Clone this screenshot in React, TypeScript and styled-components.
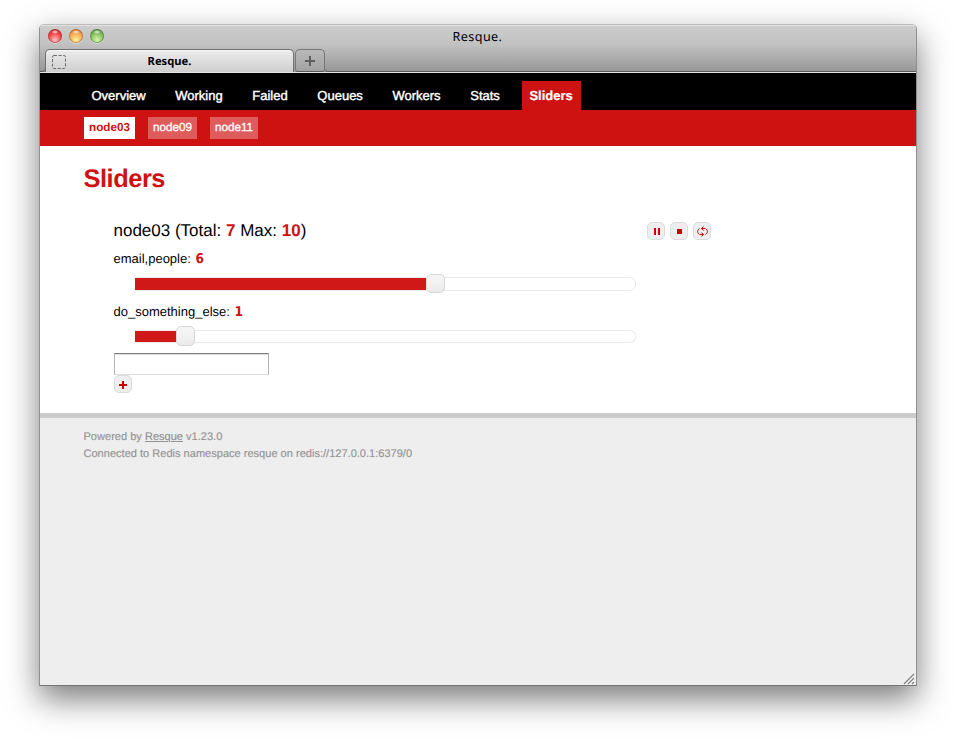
import React from "react";
import styled, { createGlobalStyle } from "styled-components";

const GlobalStyle = createGlobalStyle`
  * { box-sizing: border-box; }
  body {
    margin: 0;
    background: #fff;
    overflow: hidden;
    font-family: "Liberation Sans", Arial, sans-serif;
    font-size: 13px;
    color: #000;
    text-rendering: geometricPrecision;
  }
`;

const Desktop = styled.div`
  width: 956px;
  height: 740px;
  padding: 24px 39px 0;
`;

const Window = styled.div`
  width: 878px;
  height: 662px;
  display: flex;
  flex-direction: column;
  border: 1px solid #8f8f8f;
  border-top-color: #bdbdbd;
  border-bottom-color: #747474;
  border-radius: 5px 5px 0 0;
  box-shadow: 0 13px 32px rgba(0, 0, 0, 0.52);
  overflow: hidden;
`;

const Chrome = styled.div`
  height: 48px;
  flex: none;
  display: flex;
  flex-direction: column;
  border-top: 1px solid #e2e2e2;
  border-bottom: 1px solid #e6e6e6;
  background: linear-gradient(#cdcdcd, #c1c1c1 40%, #989898 98%);
`;

const TitleBar = styled.div`
  height: 23px;
  display: grid;
  grid-template-columns: 80px 1fr 80px;
  padding-left: 8px;
  padding-right: 9px;
`;

const Lights = styled.div`
  display: flex;
  gap: 7px;
  padding-top: 3px;
`;

const Light = styled.span<{ $dark: string; $mid: string; $glow: string }>`
  width: 14px;
  height: 14px;
  border-radius: 50%;
  background:
    radial-gradient(ellipse 4px 2px at 50% 3px, rgba(255, 255, 255, 0.85), rgba(255, 255, 255, 0) 100%),
    radial-gradient(circle at 50% 78%, ${(p) => p.$glow} 0, ${(p) => p.$mid} 56%, ${(p) => p.$dark} 100%);
  box-shadow: inset 0 0 1px 0.5px ${(p) => p.$dark}, 0 1px 0 rgba(255, 255, 255, 0.4);
`;

const Title = styled.div`
  text-align: center;
  font: 12.6px/21px "Noto Sans", sans-serif;
  letter-spacing: 0.4px;
`;

const TabStrip = styled.div`
  display: flex;
  height: 23px;
`;

const StripLine = styled.div<{ $width?: number; $side: "left" | "right" }>`
  ${(p) => (p.$width ? `width: ${p.$width}px;` : "flex: 1;")}
  border-bottom: 1px solid #5c5c5c;
  ${(p) =>
    p.$side === "left"
      ? "border-right: 1px solid #6b6b6b; border-bottom-right-radius: 4px; margin-right: -1px;"
      : "border-left: 1px solid #777; border-bottom-left-radius: 4px; margin-left: -1px;"}
  height: 19px;
  margin-top: 4px;
`;

const Tab = styled.div`
  width: 249px;
  height: 23px;
  display: grid;
  grid-template-columns: 28px 1fr 28px;
  align-items: center;
  border: 1px solid #717171;
  border-bottom: 0;
  border-radius: 5px 5px 0 0;
  background: linear-gradient(#ededed, #e3e3e3 30%, #cfcfcf);
  box-shadow: inset 0 1px 0 #f6f6f6;
`;

const Favicon = styled.svg`
  margin-left: 5px;
  display: block;
`;

const TabLabel = styled.span`
  text-align: center;
  font: bold 11.2px/22px "Noto Sans", sans-serif;
  padding-top: 1px;
`;

const NewTab = styled.div`
  width: 30px;
  height: 23px;
  margin-left: 1px;
  display: flex;
  align-items: center;
  justify-content: center;
  border: 1px solid #777;
  border-bottom-color: #5c5c5c;
  border-radius: 5px 5px 3px 3px;
  background: linear-gradient(#b9b9b9, #a2a2a2);
`;

const Nav = styled.nav`
  height: 37px;
  flex: none;
  display: flex;
  align-items: flex-end;
  gap: 14px;
  padding-left: 43.7px;
  background: #000;
`;

const NavItem = styled.a<{ $active?: boolean }>`
  height: 29px;
  padding: 0 7.8px;
  line-height: 29px;
  color: #fff;
  background: ${(p) => (p.$active ? "#ce1212" : "transparent")};
  font-weight: ${(p) => (p.$active ? "bold" : "normal")};
  -webkit-text-stroke: ${(p) => (p.$active ? "0.2px #fff" : "0.4px #fff")};
`;

const SubNav = styled.nav`
  height: 36px;
  flex: none;
  display: flex;
  align-items: center;
  gap: 13px;
  padding-left: 44px;
  background: #ce1212;
`;

const SubItem = styled.a<{ $active?: boolean }>`
  height: 22px;
  padding: 0 5px;
  font-size: 11.7px;
  line-height: 22px;
  color: ${(p) => (p.$active ? "#ce1212" : "#fff")};
  background: ${(p) => (p.$active ? "#fff" : "#df5c5c")};
  font-weight: ${(p) => (p.$active ? "bold" : "normal")};
  -webkit-text-stroke: ${(p) => (p.$active ? "0" : "0.3px #fff")};
`;

const Main = styled.main`
  height: 267px;
  flex: none;
  padding: 19px 0 0 43.5px;
  background: #fff;
`;

const Heading = styled.h1`
  margin: 0;
  height: 30px;
  font-size: 25.4px;
  line-height: 29px;
  letter-spacing: -0.45px;
  color: #ce1212;
`;

const Host = styled.section`
  padding: 26px 0 0 30.5px;
`;

const HostHeader = styled.div`
  width: 597px;
  display: flex;
  justify-content: space-between;
  height: 20px;
`;

const HostTitle = styled.h3`
  margin: 0 0 0 -0.5px;
  font-size: 17px;
  line-height: 19px;
  font-weight: normal;
`;

const Count = styled.b`
  color: #ce1212;
`;

const Controls = styled.div`
  display: flex;
  gap: 5px;
  padding-top: 1px;
`;

const IconButton = styled.button`
  width: 18px;
  height: 18px;
  padding: 0;
  display: block;
  border: 1px solid #d8dcdf;
  border-radius: 5px;
  background: #eee;
  svg { display: block; }
`;

const QueueLabel = styled.div<{ $top: number }>`
  margin-top: ${(p) => p.$top}px;
  margin-left: -0.5px;
  height: 16px;
  line-height: 16px;
`;

const QueueCount = styled.b`
  margin-left: 1px;
  color: #ce1212;
  font: bold 13.5px/16px "DejaVu Sans Condensed", "DejaVu Sans", sans-serif;
`;

const Track = styled.div<{ $top: number; $height: number }>`
  margin: ${(p) => p.$top}px 0 0 21px;
  width: 501px;
  height: ${(p) => p.$height}px;
  display: flex;
  align-items: center;
  border: 1px solid #ebebeb;
  border-left: 0;
  border-radius: 0 6px 6px 0;
`;

const Fill = styled.div`
  height: 100%;
  background: #d01818;
`;

const Handle = styled.div<{ $height: number }>`
  flex: none;
  width: 19px;
  height: ${(p) => p.$height}px;
  margin-bottom: 1px;
  border: 1px solid #d5d8da;
  border-radius: 5px;
  background: linear-gradient(#f7f7f7, #ebebeb);
`;

const QueueInput = styled.input`
  display: block;
  width: 155px;
  height: 22px;
  margin-top: 10px;
  padding: 0 3px;
  border: 1px solid #b4b4b4;
  border-top-color: #7c7c7c;
  border-bottom-color: #dcdcdc;
  border-radius: 0;
  background: #fff;
  box-shadow: inset 0 1px 0 #dedede;
`;

const Footer = styled.footer`
  flex: 1;
  display: flex;
  flex-direction: column;
  justify-content: space-between;
  padding: 11px 0 0 43.5px;
  border-top: 5px solid #ccc;
  background: #eee;
  color: #949494;
  font-size: 11.05px;
  line-height: 17px;
  -webkit-text-stroke: 0.15px #949494;
`;

const FooterLink = styled.a`
  color: #8f8f8f;
  text-decoration: underline;
`;

const Grip = styled.svg`
  align-self: flex-end;
  display: block;
  margin-right: 1px;
`;

const navItems = ["Overview", "Working", "Failed", "Queues", "Workers", "Stats", "Sliders"];
const nodes = ["node03", "node09", "node11"];
const queues = [
  { name: "email,people", value: 6, fill: 291, top: 10, track: 10, height: 14, handle: 19 },
  { name: "do_something_else", value: 1, fill: 41, top: 13, track: 10, height: 13, handle: 20 },
];

const lights = [
  { dark: "#9c2a2a", mid: "#f03a3c", glow: "#ffc6c6" },
  { dark: "#a5592a", mid: "#f3a449", glow: "#fff3a0" },
  { dark: "#43702f", mid: "#7cba56", glow: "#dcf7b0" },
];

export default function App() {
  return (
    <Desktop>
      <GlobalStyle />
      <Window>
        <Chrome>
          <TitleBar>
            <Lights>
              {lights.map((l) => (
                <Light key={l.mid} $dark={l.dark} $mid={l.mid} $glow={l.glow} />
              ))}
            </Lights>
            <Title>Resque.</Title>
          </TitleBar>
          <TabStrip>
            <StripLine $side="left" $width={6} />
            <Tab>
              <Favicon width="16" height="16" viewBox="0 0 16 16">
                <rect x="1.5" y="1.5" width="13" height="13" rx="1.5" fill="none" stroke="#6a6a6a" strokeDasharray="3 1.6" />
              </Favicon>
              <TabLabel>Resque.</TabLabel>
            </Tab>
            <NewTab>
              <svg width="12" height="12" viewBox="0 0 12 12">
                <path d="M6 1v10M1 6h10" stroke="#5e5e5e" strokeWidth="2" />
              </svg>
            </NewTab>
            <StripLine $side="right" />
          </TabStrip>
        </Chrome>
        <Nav>
          {navItems.map((n) => (
            <NavItem key={n} $active={n === "Sliders"}>{n}</NavItem>
          ))}
        </Nav>
        <SubNav>
          {nodes.map((n) => (
            <SubItem key={n} $active={n === "node03"}>{n}</SubItem>
          ))}
        </SubNav>
        <Main>
          <Heading>Sliders</Heading>
          <Host>
            <HostHeader>
              <HostTitle>
                node03 (Total: <Count>7</Count> Max: <Count>10</Count>)
              </HostTitle>
              <Controls>
                <IconButton aria-label="Pause">
                  <svg width="16" height="16" fill="#c00"><path d="M6 5h2v7H6zM10 5h2v7h-2z" /></svg>
                </IconButton>
                <IconButton aria-label="Stop">
                  <svg width="16" height="16" fill="#c00"><path d="M6 6h5v5H6z" /></svg>
                </IconButton>
                <IconButton aria-label="Reload">
                  <svg width="16" height="16" fill="none" stroke="#c00" strokeWidth="1">
                    <path d="M5.5 11.5C3 10 3 7 5.5 5.5M7.5 5.5H11M9.5 3.5L7.5 5.5L9.5 7.5M11.5 5.5C14 7 14 10 11.5 11.5M9.5 11.5H6M7.5 9.5L9.5 11.5L7.5 13.5" />
                  </svg>
                </IconButton>
              </Controls>
            </HostHeader>
            {queues.map((q) => (
              <React.Fragment key={q.name}>
                <QueueLabel $top={q.top}>
                  {q.name}: <QueueCount>{q.value}</QueueCount>
                </QueueLabel>
                <Track $top={q.track} $height={q.height}>
                  <Fill style={{ width: q.fill }} />
                  <Handle $height={q.handle} />
                </Track>
              </React.Fragment>
            ))}
            <QueueInput type="text" />
            <IconButton aria-label="Add queue">
              <svg width="16" height="16" fill="#c00"><path d="M7 5h2v3h3v2H9v3H7v-3H4V8h3z" /></svg>
            </IconButton>
          </Host>
        </Main>
        <Footer>
          <div>
            <div>Powered by <FooterLink>Resque</FooterLink> v1.23.0</div>
            <div>Connected to Redis namespace resque on redis://127.0.0.1:6379/0</div>
          </div>
          <Grip width="12" height="13" viewBox="0 0 12 13">
            <path d="M1 12L11 2M5 12L11 6M9 12L11 10" stroke="#7d7d7d" strokeWidth="1.1" />
            <path d="M2.500 12.500L11.500 3.500M6.500 12.500L11.500 7.500" stroke="#fff" strokeWidth="0.800" />
          </Grip>
        </Footer>
      </Window>
    </Desktop>
  );
}
